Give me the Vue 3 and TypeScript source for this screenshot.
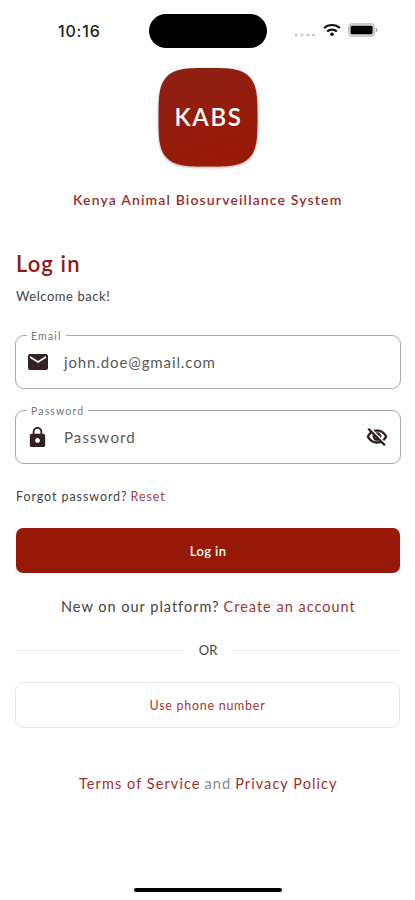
<script setup lang="ts">
import { ref } from 'vue'

const email = ref('john.doe@gmail.com')
const password = ref('Password')
</script>

<template>
  <main class="screen">
    <header class="status">
      <span class="time">10:16</span>
      <span class="island"></span>
      <span class="signals">
        <svg class="dots" width="22" height="4" viewBox="0 0 22 4">
          <g fill="#c9c9c9">
            <circle cx="2.2" cy="2" r="1.5" /><circle cx="8" cy="2" r="1.5" />
            <circle cx="13.8" cy="2" r="1.5" /><circle cx="19.6" cy="2" r="1.5" />
          </g>
        </svg>
        <svg class="wifi" width="18" height="14" viewBox="0 0 18 14" fill="none" stroke="#111" stroke-width="2.1">
          <path d="M1 5.100C5.400.9 12.600.9 17 5.100" />
          <path d="M4.100 8.500c2.800-2.500 7-2.500 9.800 0" />
          <circle cx="9" cy="11.300" r="1.800" fill="#111" stroke="none" />
        </svg>
        <svg class="battery" width="30" height="14" viewBox="0 0 30 14">
          <rect x=".8" y=".8" width="25.6" height="12.4" rx="3.6" fill="#ddd" stroke="#c4c4c4" stroke-width="1.5" />
          <rect x="2.6" y="2.7" width="22" height="8.6" rx="1.5" fill="#000" />
          <path d="M27.800 4.800c2 .8 2 3.600 0 4.400z" fill="#999" />
        </svg>
      </span>
    </header>

    <div class="logo">
      <svg class="logo-shape" width="104" height="104" viewBox="0 0 104 104">
        <defs>
          <linearGradient id="brand" x1="0" y1="0" x2="0.3" y2="1">
            <stop offset="0" stop-color="#8d2114" />
            <stop offset="1" stop-color="#991a08" />
          </linearGradient>
        </defs>
        <path d="M52 2C74 2 85 2.500 93 10.500C101 18.500 101.500 30 101.500 51C101.500 73 101 84 93 92C85 100 74 100.500 52 100.500C30 100.500 19 100 11 92C3 84 2.500 73 2.500 51C2.500 30 3 18.500 11 10.500C19 2.500 30 2 52 2Z" fill="url(#brand)" />
      </svg>
      <span class="logo-text">KABS</span>
    </div>
    <h1 class="system">Kenya Animal Biosurveillance System</h1>

    <h2 class="heading">Log in</h2>
    <p class="welcome">Welcome back!</p>

    <div class="field">
      <span class="label label-email">Email</span>
      <svg class="lead" width="24" height="24" viewBox="0 0 24 24" fill="#35211f">
        <path d="M20 4H4c-1.100 0-2 .9-2 2v12c0 1.100.9 2 2 2h16c1.100 0 2-.9 2-2V6c0-1.100-.9-2-2-2zm0 4-8 5-8-5V6l8 5 8-5v2z" />
      </svg>
      <span class="value value-email">{{ email }}</span>
    </div>

    <div class="field field-password">
      <span class="label label-password">Password</span>
      <svg class="lead lead-lock" width="23" height="23" viewBox="0 0 24 24" fill="#35211f">
        <path d="M18 8h-1V6c0-2.760-2.240-5-5-5S7 3.240 7 6v2H6c-1.100 0-2 .9-2 2v10c0 1.100.9 2 2 2h12c1.100 0 2-.9 2-2V10c0-1.100-.9-2-2-2zm-6 9.500c-1.400 0-2.500-1.100-2.500-2.500s1.100-2.500 2.500-2.500 2.500 1.100 2.500 2.500-1.100 2.500-2.500 2.500zm3.100-9.500H8.900V6c0-1.710 1.390-3.100 3.100-3.100s3.100 1.390 3.100 3.100v2z" />
      </svg>
      <span class="value value-password">{{ password }}</span>
      <svg class="eye" width="22" height="22" viewBox="0 0 24 24" fill="#2c1d1b">
        <path d="M12 6c3.790 0 7.170 2.130 8.820 5.500-.59 1.220-1.420 2.270-2.410 3.120l1.410 1.410c1.390-1.230 2.490-2.770 3.180-4.530C21.270 7.110 17 4 12 4c-1.270 0-2.490.2-3.640.57l1.650 1.650C10.660 6.090 11.320 6 12 6zm-1.070 1.140L13 9.210c.57.25 1.030.71 1.280 1.280l2.070 2.070c.08-.34.14-.7.14-1.070C16.500 9.010 14.480 7 12 7c-.37 0-.72.05-1.070.14zM2.010 3.870l2.680 2.680C3.060 7.830 1.770 9.530 1 11.500 2.730 15.890 7 19 12 19c1.520 0 2.980-.29 4.320-.82l3.420 3.420 1.410-1.410L3.420 2.450 2.010 3.870zm7.500 7.500 2.610 2.610c-.04.01-.08.02-.12.02-1.380 0-2.500-1.120-2.500-2.500 0-.05.01-.08.01-.13zm-3.400-3.400 1.750 1.750c-.23.55-.36 1.150-.36 1.780 0 2.480 2.020 4.500 4.500 4.500.63 0 1.230-.13 1.770-.36l.98.98c-.88.24-1.800.38-2.750.38-3.790 0-7.170-2.130-8.820-5.500.7-1.430 1.720-2.610 2.930-3.530z" stroke="#2c1d1b" stroke-width=".6" />
      </svg>
    </div>

    <p class="forgot"><span class="forgot-q">Forgot password?</span><a class="reset">Reset</a></p>
    <button class="primary">Log in</button>
    <p class="signup"><span class="signup-q">New on our platform?</span><a class="create">Create an account</a></p>
    <div class="divider"><i></i><span>OR</span><i></i></div>
    <button class="secondary">Use phone number</button>
    <p class="legal"><a class="terms">Terms of Service</a><span class="and">and</span><a class="privacy">Privacy Policy</a></p>
    <div class="home"></div>
  </main>
</template>

<style>
body {
  margin: 0;
  background: #fff;
}
</style>

<style scoped>
* {
  box-sizing: border-box;
}
.screen {
  width: 415px;
  height: 900px;
  overflow: hidden;
  padding: 0 15px;
  background: #fefefe;
  display: flex;
  flex-direction: column;
  font-family: Lato, "Noto Sans", sans-serif;
  color: #444;
}
h1, h2, p {
  margin: 0;
  font-weight: 400;
}
p, h1, h2, .value, .label {
  white-space: nowrap;
}
.status {
  height: 62px;
  flex: none;
  display: grid;
  grid-template-columns: 134px 118px 1fr;
  align-items: center;
}
.time {
  padding-left: 43px;
  font: 500 16px/20px Inter, sans-serif;
  letter-spacing: 0.8px;
  color: #222;
}
.island {
  height: 34px;
  border-radius: 17px;
  background: #000;
}
.signals {
  display: flex;
  align-items: center;
  padding-left: 27px;
}
.dots {
  margin-top: 8px;
}
.wifi {
  margin: -2px 0 0 7px;
}
.battery {
  margin: -2px 0 0 7px;
}
.logo {
  flex: none;
  align-self: center;
  width: 104px;
  height: 104px;
  margin: 4px 0 0 1px;
  display: grid;
  place-items: center;
}
.logo > * {
  grid-area: 1 / 1;
}
.logo-shape {
  filter: drop-shadow(0 1px 1px rgba(60, 0, 0, 0.35));
}
.logo-text {
  z-index: 1;
  color: #fff;
  font-size: 24px;
  font-weight: 600;
  line-height: 30px;
  letter-spacing: 1.6px;
  padding: 0 0 2px 1px;
}
.system {
  margin: 20px 0 0 58px;
  font-size: 14px;
  line-height: 20px;
  font-weight: 600;
  letter-spacing: 1.15px;
  color: #96302e;
}
.heading {
  margin: 40px 0 0 1px;
  font-size: 22px;
  line-height: 28px;
  font-weight: 600;
  letter-spacing: 1.1px;
  color: #8e1a14;
}
.welcome {
  margin: 8px 0 1px 1px;
  font-size: 13px;
  line-height: 20px;
  letter-spacing: 0.55px;
}
.field {
  flex: none;
  height: 54px;
  margin: 28px -1px 0 0;
  border: 1px solid #aaa;
  border-radius: 9px;
  display: flex;
  align-items: center;
  position: relative;
  padding: 0 12px 0 10px;
}
.field-password {
  margin-top: 21px;
}
.lead-lock {
  margin-right: 1px;
}
.label {
  position: absolute;
  top: -7px;
  left: 11px;
  padding: 0 4px;
  background: #fefefe;
  font-size: 10.5px;
  line-height: 14px;
  color: #777;
  letter-spacing: 1.15px;
}
.value {
  margin-left: 14px;
  font-size: 15px;
  line-height: 20px;
  letter-spacing: 0.88px;
  color: #5a5a5a;
}
.value-password {
  letter-spacing: 1.1px;
}
.eye {
  margin-left: auto;
}
.forgot {
  margin: 23px 0 0 1px;
  font-size: 12.5px;
  line-height: 20px;
  letter-spacing: 0.92px;
}
.reset {
  margin-left: 3px;
  color: #a64240;
}
button {
  flex: none;
  font-family: inherit;
  height: 45px;
  border-radius: 7px;
  padding: 0;
}
.primary {
  margin: 21px 0 0 1px;
  border: 0;
  background: #961a07;
  color: #fff;
  font-size: 13px;
  font-weight: 600;
  letter-spacing: 0.4px;
}
.signup {
  margin: 24px 0 0 46px;
  font-size: 14.5px;
  line-height: 20px;
  letter-spacing: 1px;
}
.create {
  margin-left: 4px;
  color: #a33431;
}
.divider {
  display: flex;
  align-items: center;
  justify-content: space-between;
  height: 20px;
  margin: 23px 0 1px 1px;
  font-size: 13px;
}
.divider i {
  width: 168px;
  height: 1px;
  background: #ebebeb;
}
.secondary {
  margin: 21px 0 0;
  border: 1px solid #e7e7e7;
  border-radius: 9px;
  background: #fff;
  color: #9f3836;
  font-size: 12.5px;
  letter-spacing: 0.72px;
  height: 46px;
}
.legal {
  margin: 46px 0 0 64px;
  font-size: 14.5px;
  line-height: 20px;
  letter-spacing: 1.07px;
  color: #9c302e;
}
.and {
  margin: 0 4px;
  color: #888;
}
.home {
  flex: none;
  align-self: center;
  width: 148px;
  height: 4px;
  margin: 94px 0 0 1px;
  border-radius: 2px;
  background: #000;
}
</style>
